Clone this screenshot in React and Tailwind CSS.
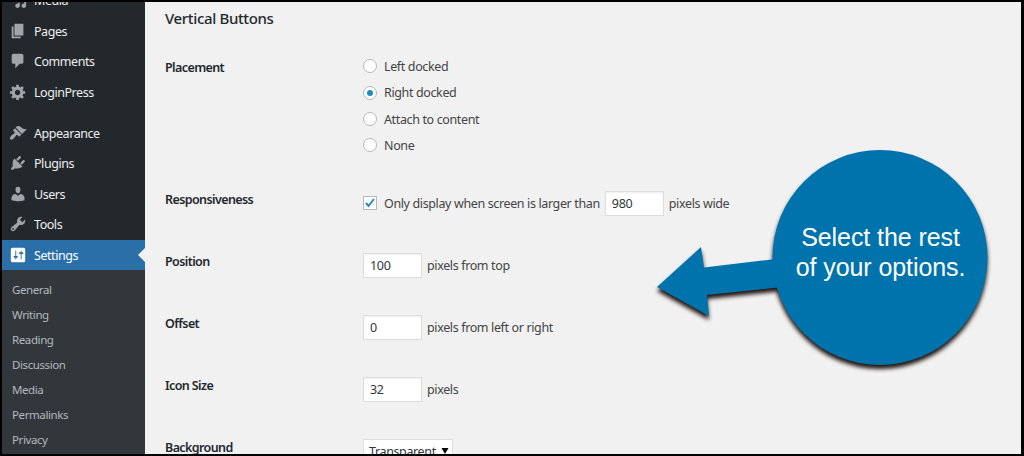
import React, { useState } from "react";

// Sidebar icons, drawn on a 20x20 grid
const icons = {
  media:
    "M13 11V4c0-.55-.45-1-1-1h-1.67L9 1H5L3.67 3H2c-.55 0-1 .45-1 1v7c0 .55.45 1 1 1h10c.55 0 1-.45 1-1zM7 4.5c1.38 0 2.5 1.12 2.5 2.5S8.38 9.5 7 9.5 4.5 8.38 4.5 7 5.62 4.5 7 4.5zM14 6h5v10.5c0 1.38-1.12 2.5-2.5 2.5S14 17.88 14 16.5s1.12-2.5 2.5-2.5c.17 0 .34.02.5.05V9h-3V6zm-4 8.05V13h2v3.5c0 1.38-1.12 2.5-2.5 2.5S7 17.88 7 16.5 8.12 14 9.5 14c.17 0 .34.02.5.05z",
  pages: "M6 15V2h10v13H6zm-1 1h8v2H3V5h2v11z",
  comments:
    "M5 2h9c1.1 0 2 .9 2 2v7c0 1.1-.9 2-2 2h-2l-5 5v-5H5c-1.1 0-2-.9-2-2V4c0-1.1.9-2 2-2z",
  gear:
    "M18 12h-2.18c-.17.7-.44 1.35-.81 1.93l1.54 1.54-2.1 2.1-1.54-1.54c-.58.36-1.23.63-1.91.79V19H8v-2.18c-.68-.16-1.33-.43-1.91-.79l-1.54 1.54-2.12-2.12 1.54-1.54c-.36-.58-.63-1.23-.79-1.91H1V9.03h2.17c.16-.7.44-1.35.8-1.94L2.43 5.55l2.1-2.1 1.54 1.54c.58-.37 1.24-.64 1.93-.81V2h3v2.18c.68.16 1.33.43 1.91.79l1.54-1.54 2.12 2.12-1.54 1.54c.36.59.64 1.24.8 1.94H18V12zm-8.5 1.5c1.66 0 3-1.34 3-3s-1.34-3-3-3-3 1.34-3 3 1.34 3 3 3z",
  appearance:
    "M14.48 11.06L7.41 3.99l1.5-1.5c.5-.56 2.3-.47 3.51.32 1.21.8 1.43 1.28 2.91 2.1 1.18.64 2.45 1.26 4.45.85zm-.71.71L6.7 4.7 4.93 6.47c-.39.39-.39 1.02 0 1.41l1.06 1.06c.39.39.39 1.03 0 1.42-.6.6-1.43 1.11-2.21 1.69-.35.26-.7.53-1.01.84C1.43 14.23.4 16.08 1.4 17.07c.99 1 2.84-.03 4.18-1.36.31-.31.58-.66.85-1.02.57-.78 1.08-1.61 1.69-2.21.39-.39 1.02-.39 1.41 0l1.06 1.06c.39.39 1.02.39 1.41 0z",
  plugins:
    "M13.11 4.36L9.87 7.6 8 5.73l3.24-3.24c.35-.34 1.05-.2 1.56.32.52.51.66 1.21.31 1.55zm-8 1.77l.91-1.12 9.01 9.01-1.19.84c-.71.71-2.63 1.16-3.82 1.16H6.14L4.9 17.26c-.59.59-1.54.59-2.12 0-.59-.58-.59-1.53 0-2.12l1.24-1.24v-3.88c0-1.13.4-3.19 1.09-3.89zm7.26 3.97l3.24-3.24c.34-.35 1.04-.21 1.55.31.52.51.66 1.21.31 1.55l-3.24 3.25z",
  users:
    "M10 9.25c-2.27 0-2.73-3.44-2.73-3.44C7 4.02 7.82 2 9.97 2c2.16 0 2.98 2.02 2.71 3.81 0 0-.41 3.44-2.68 3.44zm0 2.57L12.72 10c2.39 0 4.52 2.33 4.52 4.53v2.49s-3.65 1.13-7.24 1.13c-3.65 0-7.24-1.13-7.24-1.13v-2.49c0-2.25 1.94-4.48 4.47-4.48z",
  tools:
    "M16.68 9.77c-1.34 1.34-3.3 1.67-4.95.99l-5.41 6.52c-.99.99-2.59.99-3.58 0s-.99-2.59 0-3.57l6.52-5.42c-.68-1.65-.35-3.61.99-4.95 1.28-1.28 3.12-1.62 4.72-1.06l-2.89 2.89 2.82 2.82 2.86-2.87c.53 1.58.18 3.39-1.08 4.65zM3.81 16.21c.4.39 1.04.39 1.43 0 .4-.4.4-1.04 0-1.43-.39-.4-1.03-.4-1.43 0-.39.39-.39 1.03 0 1.43z",
  settings:
    "M18 16V4c0-1.1-.9-2-2-2H4c-1.1 0-2 .9-2 2v12c0 1.1.9 2 2 2h12c1.1 0 2-.9 2-2zM8 11h1c.55 0 1 .45 1 1s-.45 1-1 1H8v1.5c0 .28-.22.5-.5.5s-.5-.22-.5-.5V13H6c-.55 0-1-.45-1-1s.45-1 1-1h1V5.5c0-.28.22-.5.5-.5s.5.22.5.5V11zm5-2h-1c-.55 0-1-.45-1-1s.45-1 1-1h1V5.5c0-.28.22-.5.5-.5s.5.22.5.5V7h1c.55 0 1 .45 1 1s-.45 1-1 1h-1v5.5c0 .28-.22.5-.5.5s-.5-.22-.5-.5V9z",
};

const contentMenu = [
  { name: "Media", icon: "media" },
  { name: "Pages", icon: "pages" },
  { name: "Comments", icon: "comments" },
  { name: "LoginPress", icon: "gear" },
];

const adminMenu = [
  { name: "Appearance", icon: "appearance" },
  { name: "Plugins", icon: "plugins" },
  { name: "Users", icon: "users" },
  { name: "Tools", icon: "tools" },
  { name: "Settings", icon: "settings", active: true },
];

const subMenu = ["General", "Writing", "Reading", "Discussion", "Media", "Permalinks", "Privacy"];

function MenuItem({ item }) {
  return (
    <li
      className={`relative flex h-[30.5px] items-center pl-[7px] text-[12.5px] tracking-[-0.45px] ${
        item.active ? "bg-[#2a6fa8] text-white" : "text-[#eee]"
      }`}
    >
      <svg
        viewBox="0 0 20 20"
        className={`mr-[7px] size-[18px] shrink-0 ${item.active ? "fill-white" : "fill-[#a0a5aa]"}`}
      >
        <path d={icons[item.icon]} />
      </svg>
      <span className="pt-[3px]">{item.name}</span>
      {item.active && (
        <span className="absolute right-0 top-[8px] border-y-[7px] border-r-[7px] border-y-transparent border-r-[#f1f1f1]" />
      )}
    </li>
  );
}

function Sidebar() {
  return (
    <nav className="flex w-[143px] shrink-0 flex-col bg-[#23282d]">
      <ul className="-mt-[17px]">
        {contentMenu.map((item) => (
          <MenuItem key={item.name} item={item} />
        ))}
      </ul>
      <ul className="mt-[10.5px]">
        {adminMenu.map((item) => (
          <MenuItem key={item.name} item={item} />
        ))}
      </ul>
      <ul className="flex-1 bg-[#32373c] pt-[7px]">
        {subMenu.map((name) => (
          <li
            key={name}
            className="h-[25px] pl-[10px] text-[11.5px] leading-[25px] tracking-[-0.4px] text-[#b4b9be]"
          >
            {name}
          </li>
        ))}
      </ul>
    </nav>
  );
}

function Row({ label, tall, children }) {
  return (
    <div className={`flex shrink-0 items-start ${tall ? "h-[132px]" : "h-[62px]"}`}>
      <div className="w-[198px] shrink-0 pt-px text-[12.5px] font-semibold leading-4 tracking-[-0.6px] text-[#23282d]">
        {label}
      </div>
      {children}
    </div>
  );
}

function NumberBox({ value, onChange }) {
  return (
    <input
      type="text"
      value={value}
      onChange={onChange}
      className="h-[25px] w-[59px] border border-[#ddd] bg-white px-[6px] text-[12.5px] tracking-[-0.3px] text-[#32373c] shadow-[inset_0_1px_2px_rgba(0,0,0,0.07)]"
    />
  );
}

function Callout() {
  return (
    <div className="absolute left-[638px] top-[138px] h-[250px] w-[370px]">
      <svg
        viewBox="0 0 370 250"
        className="absolute inset-0 fill-[#0073ad] drop-shadow-[0_4px_2px_rgba(20,8,4,0.95)]"
      >
        <path d="M17 147L61 107L64 127.500L136 119L142 147L67 155L69 176Z" />
        <circle cx="240" cy="117.500" r="107.500" />
      </svg>
      <p className="absolute left-[133px] top-[82px] w-[215px] text-center font-['Liberation_Sans',sans-serif] text-[25px] leading-[30px] tracking-[-0.08px] text-white">
        Select the rest
        <br />
        of your options.
      </p>
    </div>
  );
}

export default function App() {
  const [placement, setPlacement] = useState("Right docked");
  const [onlyLarge, setOnlyLarge] = useState(true);
  const [values, setValues] = useState({ width: "980", top: "100", offset: "0", size: "32" });

  function handleChange(key) {
    return (e) => setValues((prev) => ({ ...prev, [key]: e.target.value }));
  }

  return (
    <div className="relative flex h-[456px] w-[1024px] overflow-hidden border-y-2 border-l-2 border-r-[3px] border-black bg-[#f1f1f1] font-['Noto_Sans',sans-serif]">
      <Sidebar />
      <main className="flex min-w-0 flex-1 flex-col pl-5 text-[12.5px] tracking-[-0.37px] text-[#444]">
        <h2 className="mb-[30px] mt-[5px] h-[22px] shrink-0 text-[15px] font-medium leading-[22px] tracking-[-0.35px] text-[#23282d]">
          Vertical Buttons
        </h2>

        <Row label="Placement" tall>
          <div className="-mt-[6px]">
            {["Left docked", "Right docked", "Attach to content", "None"].map((option) => (
              <label key={option} className="flex h-[26.400px] items-center">
                <input
                  type="radio"
                  name="placement"
                  className="sr-only"
                  checked={placement === option}
                  onChange={() => setPlacement(option)}
                />
                <span className="mr-[7px] flex size-[14px] items-center justify-center rounded-full border border-[#b4b9be] bg-white">
                  {placement === option && <span className="size-[6px] rounded-full bg-[#1e8cbe]" />}
                </span>
                <span className="pt-[2px]">{option}</span>
              </label>
            ))}
          </div>
        </Row>

        <Row label="Responsiveness">
          <label className="flex h-6 items-center">
            <input
              type="checkbox"
              className="sr-only"
              checked={onlyLarge}
              onChange={(e) => setOnlyLarge(e.target.checked)}
            />
            <span className="mr-[7px] flex size-[14px] items-center justify-center border border-[#b4b9be] bg-white">
              {onlyLarge && (
                <svg viewBox="0 0 12 12" className="size-3 fill-none stroke-[#1e8cbe] stroke-2">
                  <path d="M2 6l2.500 3L10 2" />
                </svg>
              )}
            </span>
            <span className="pt-[2px]">Only display when screen is larger than</span>
          </label>
          <div className="ml-[5px] flex h-6 items-center gap-[5px]">
            <NumberBox value={values.width} onChange={handleChange("width")} />
            <span className="pt-[2px]">pixels wide</span>
          </div>
        </Row>

        <Row label="Position">
          <div className="flex h-6 items-center gap-[5px]">
            <NumberBox value={values.top} onChange={handleChange("top")} />
            <span className="pt-[2px]">pixels from top</span>
          </div>
        </Row>

        <Row label="Offset">
          <div className="flex h-6 items-center gap-[5px]">
            <NumberBox value={values.offset} onChange={handleChange("offset")} />
            <span className="pt-[2px]">pixels from left or right</span>
          </div>
        </Row>

        <Row label="Icon Size">
          <div className="flex h-6 items-center gap-[5px]">
            <NumberBox value={values.size} onChange={handleChange("size")} />
            <span className="pt-[2px]">pixels</span>
          </div>
        </Row>

        <Row label="Background">
          <button className="flex h-[26px] w-[90px] items-center justify-between border border-[#ddd] bg-white pl-[5px] pr-[3px] tracking-[-0.37px] text-[#32373c]">
            Transparent
            <svg viewBox="0 0 8 6" className="mb-[2px] h-[6px] w-2 fill-black">
              <path d="M0.500 0h7L4 6z" />
            </svg>
          </button>
        </Row>
      </main>
      <Callout />
    </div>
  );
}
